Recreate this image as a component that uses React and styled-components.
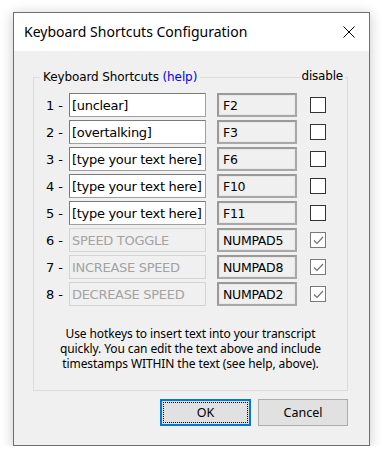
import React from 'react';
import styled, { createGlobalStyle } from 'styled-components';

const shortcuts = [
    { text: '[unclear]', key: 'F2', disabled: false },
    { text: '[overtalking]', key: 'F3', disabled: false },
    { text: '[type your text here]', key: 'F6', disabled: false },
    { text: '[type your text here]', key: 'F10', disabled: false },
    { text: '[type your text here]', key: 'F11', disabled: false },
    { text: 'SPEED TOGGLE', key: 'NUMPAD5', disabled: true },
    { text: 'INCREASE SPEED', key: 'NUMPAD8', disabled: true },
    { text: 'DECREASE SPEED', key: 'NUMPAD2', disabled: true },
];

function App() {
    return (
        <>
            <GlobalStyle />
            <Window>
                <TitleBar>
                    <Title>Keyboard Shortcuts Configuration</Title>
                    <CloseButton>
                        <svg width="12" height="12" viewBox="0 0 12 12">
                            <path d="M0.5 0.5 L11.5 11.5 M11.5 0.5 L0.5 11.5" stroke="#000" strokeWidth="1" />
                        </svg>
                    </CloseButton>
                </TitleBar>

                <Body>
                    <Group>
                        <Legend>
                            Keyboard Shortcuts <Help href="#">(help)</Help>
                        </Legend>
                        <DisableLabel>disable</DisableLabel>

                        <Rows>
                            {shortcuts.map((s, i) => (
                                <Row key={i}>
                                    <Num>{i + 1} -</Num>
                                    <TextField $disabled={s.disabled}>{s.text}</TextField>
                                    <KeyField>{s.key}</KeyField>
                                    <Check $checked={s.disabled}>
                                        {s.disabled && (
                                            <svg width="11" height="9" viewBox="0 0 11 9">
                                                <path d="M1 4.5 L4 7.5 L10 1" fill="none" stroke="#707070" strokeWidth="1.2" />
                                            </svg>
                                        )}
                                    </Check>
                                </Row>
                            ))}
                        </Rows>

                        <Note>
                            Use hotkeys to insert text into your transcript
                            quickly. You can edit the text above and include
                            timestamps WITHIN the text (see help, above).
                        </Note>
                    </Group>

                    <Buttons>
                        <Button $primary>OK</Button>
                        <Button>Cancel</Button>
                    </Buttons>
                </Body>
            </Window>
        </>
    );
}

export default App;


const GlobalStyle = createGlobalStyle`
    body {
        margin: 0;
        background: #ffffff;
        font-family: "Noto Sans", "Liberation Sans", sans-serif;
        color: #000;
    }
`;

const Window = styled.div`
    margin: 12px 0 0 13px;
    width: 357px;
    height: 434px;
    box-sizing: border-box;
    border: 1px solid #6f6f6f;
    background: #f0f0f0;
    box-shadow: 0 2px 12px rgba(0, 0, 0, 0.22);
    display: flex;
    flex-direction: column;
`;

const TitleBar = styled.div`
    height: 38px;
    background: #ffffff;
    display: flex;
    align-items: center;
    justify-content: space-between;
    padding: 0 14px 0 10px;
`;

const Title = styled.div`
    font-size: 14px;
    margin-top: -1px;
`;

const CloseButton = styled.div`
    display: flex;
    margin-top: -1px;
`;

const Body = styled.div`
    padding: 19px 21px 0 19px;
`;

const Group = styled.fieldset`
    position: relative;
    margin: 0;
    padding: 9px 0 19px 12px;
    border: 1px solid #dcdcdc;
`;

const Legend = styled.legend`
    margin-left: -6px;
    padding: 0 3px;
    font-family: "DejaVu Sans", sans-serif;
    font-size: 12px;
    line-height: 14px;
    letter-spacing: -0.1px;
`;

const Help = styled.a`
    color: #0000ee;
    text-decoration: none;
`;

const DisableLabel = styled.span`
    position: absolute;
    top: -15px;
    right: 2px;
    padding: 0 2px;
    background: #f0f0f0;
    font-family: "DejaVu Sans", sans-serif;
    font-size: 12px;
    line-height: 14px;
    letter-spacing: -0.2px;
`;

const Rows = styled.div`
    display: flex;
    flex-direction: column;
    gap: 3px;
`;

const Row = styled.div`
    display: grid;
    grid-template-columns: 23px 137px 91px 29px;
    align-items: center;
    height: 24px;
`;

const Num = styled.span`
    font-family: "DejaVu Sans", sans-serif;
    font-size: 13px;
    letter-spacing: -0.1px;
    white-space: nowrap;
`;

const TextField = styled.div`
    height: 24px;
    box-sizing: border-box;
    padding: 0 2px;
    display: flex;
    align-items: center;
    white-space: nowrap;
    overflow: hidden;
    font-family: "DejaVu Sans", sans-serif;
    font-size: 13px;
    letter-spacing: -0.3px;
    background: ${p => (p.$disabled ? '#f0f0f0' : '#ffffff')};
    color: ${p => (p.$disabled ? '#a3a3a3' : '#000000')};
    border: 1px solid ${p => (p.$disabled ? '#d4d4d4' : '#7a7a7a')};
    border-bottom-color: ${p => (p.$disabled ? '#d4d4d4' : '#a0a0a0')};
    border-right-color: ${p => (p.$disabled ? '#d4d4d4' : '#a0a0a0')};
`;

const KeyField = styled.div`
    height: 24px;
    width: 80px;
    margin-left: 11px;
    box-sizing: border-box;
    padding: 0 4px;
    display: flex;
    align-items: center;
    font-family: "DejaVu Sans", sans-serif;
    font-size: 12.5px;
    letter-spacing: -0.3px;
    background: #f0f0f0;
    border: 2px solid #a8a8a8;
    border-top-color: #9a9a9a;
    border-left-color: #9a9a9a;
    box-shadow: inset 0 0 0 1px #e8e8e8;
`;

const Check = styled.div`
    width: 16px;
    height: 16px;
    margin-left: 13px;
    box-sizing: border-box;
    background: #ffffff;
    border: 1px solid ${p => (p.$checked ? '#7a7a7a' : '#333333')};
    display: flex;
    align-items: center;
    justify-content: center;
`;

const Note = styled.p`
    margin: 20px 12px 0 0;
    text-align: center;
    font-size: 12px;
    line-height: 15px;
    letter-spacing: -0.1px;
`;

const Buttons = styled.div`
    display: flex;
    justify-content: flex-end;
    gap: 7px;
    margin-top: 8px;
`;

const Button = styled.button`
    width: ${p => (p.$primary ? '91px' : '90px')};
    height: 27px;
    box-sizing: border-box;
    font-family: "Noto Sans", sans-serif;
    font-size: 12.5px;
    color: #000;
    background: #e1e1e1;
    border: 1px solid ${p => (p.$primary ? '#0078d7' : '#adadad')};
    outline: ${p => (p.$primary ? '1px dotted #000' : 'none')};
    outline-offset: -4px;
    box-shadow: ${p => (p.$primary ? 'inset 0 0 0 1px #0078d7' : 'none')};
    padding: 0;
`;
